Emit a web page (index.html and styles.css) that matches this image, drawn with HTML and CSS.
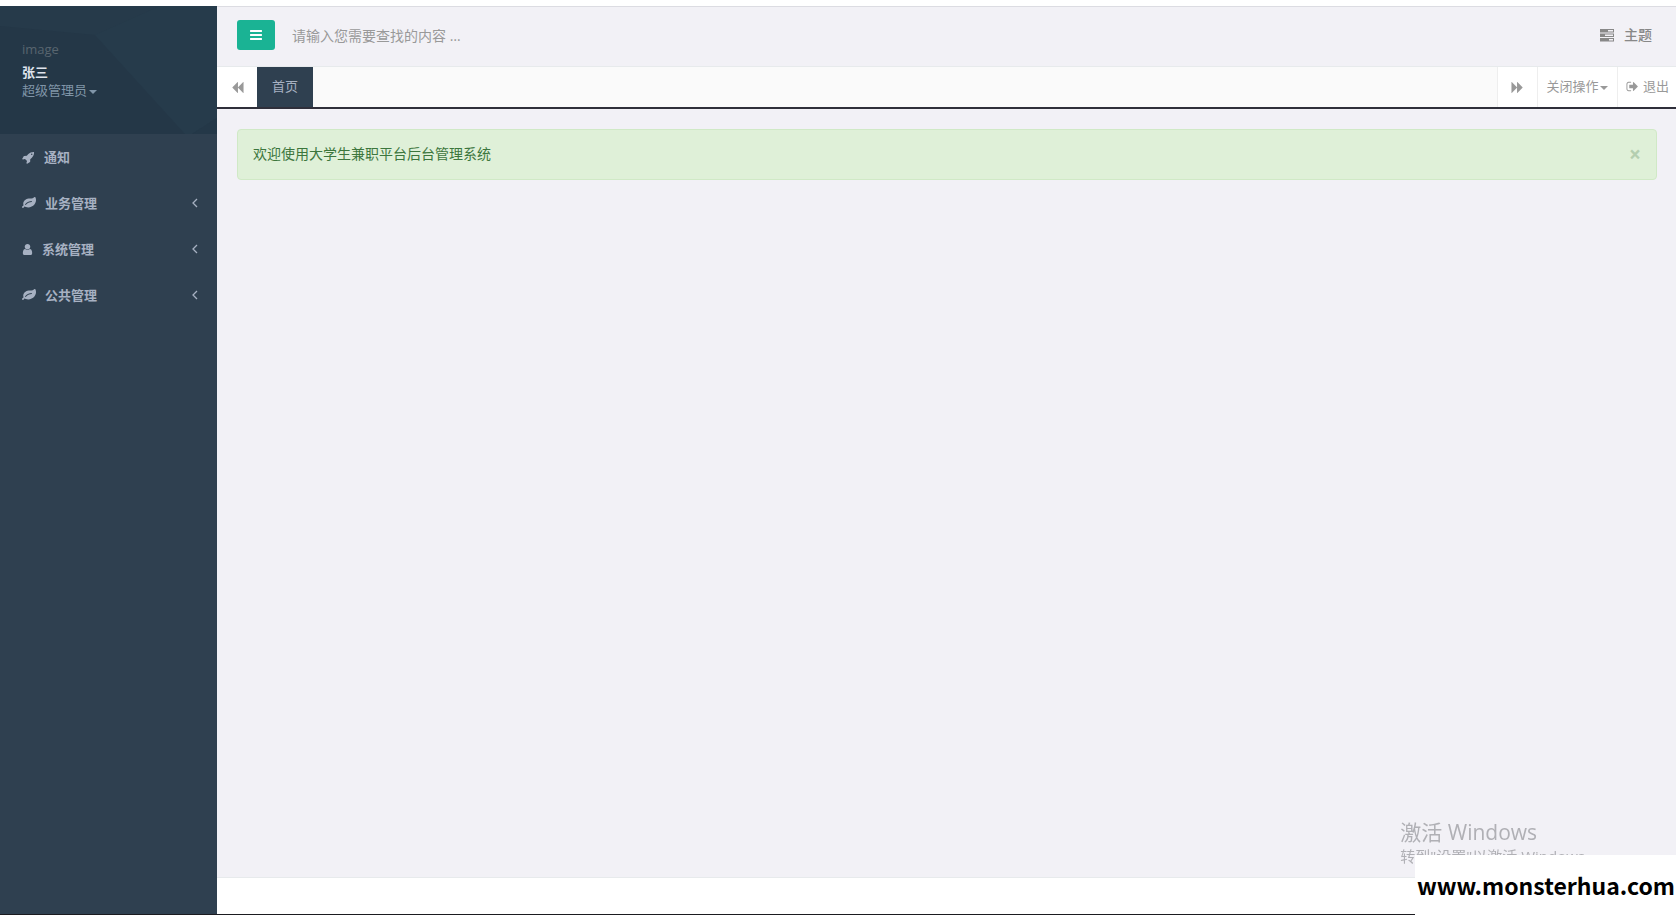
FILE: index.html
```
<!DOCTYPE html>
<html lang="zh">
<head>
    <meta charset="UTF-8">
    <meta name="viewport" content="width=device-width, initial-scale=1.0">
    <title>大学生兼职平台后台管理系统</title>
    <link rel="stylesheet" href="styles.css">
</head>
<body>
    <svg class="sprite" aria-hidden="true">
        <symbol id="icon-bars" viewBox="0 0 1792 1792"><path d="M1664 1344v128q0 26-19 45t-45 19h-1408q-26 0-45-19t-19-45v-128q0-26 19-45t45-19h1408q26 0 45 19t19 45zm0-512v128q0 26-19 45t-45 19h-1408q-26 0-45-19t-19-45v-128q0-26 19-45t45-19h1408q26 0 45 19t19 45zm0-512v128q0 26-19 45t-45 19h-1408q-26 0-45-19t-19-45v-128q0-26 19-45t45-19h1408q26 0 45 19t19 45z"/></symbol>
        <symbol id="icon-backward" viewBox="0 0 1792 1792"><path d="M1683 141q19-19 32-13t13 32v1472q0 26-13 32t-32-13l-710-710q-9-9-13-19v710q0 26-13 32t-32-13l-710-710q-19-19-19-45t19-45l710-710q19-19 32-13t13 32v710q4-10 13-19z"/></symbol>
        <symbol id="icon-forward" viewBox="0 0 1792 1792"><path transform="matrix(-1 0 0 1 1792 0)" d="M1683 141q19-19 32-13t13 32v1472q0 26-13 32t-32-13l-710-710q-9-9-13-19v710q0 26-13 32t-32-13l-710-710q-19-19-19-45t19-45l710-710q19-19 32-13t13 32v710q4-10 13-19z"/></symbol>
        <symbol id="icon-rocket" viewBox="0 0 1792 1792"><path d="M1440 448q0-40-28-68t-68-28-68 28-28 68 28 68 68 28 68-28 28-68zm224-288q0 249-75.5 430.5t-253.5 360.5q-81 80-195 176l-20 379q-2 16-16 26l-384 224q-7 4-16 4-12 0-23-9l-64-64q-13-14-8-32l85-276-281-281-276 85q-3 1-9 1-14 0-23-9l-64-64q-17-19-5-39l224-384q10-14 26-16l379-20q96-114 176-195 188-187 358-258t431-71q14 0 24 9.500t10 22.500z"/></symbol>
        <symbol id="icon-leaf" viewBox="0 0 1792 1792"><path d="M1280 704q0-26-19-45t-45-19q-172 0-318 49.500t-259.500 134-235.500 219.500q-19 21-19 45 0 26 19 45t45 19q24 0 45-19 27-24 74-71t67-66q137-124 268.500-176t313.500-52q26 0 45-19t19-45zm512-198q0 95-20 193-46 224-184.500 383t-357.500 268q-214 108-438 108-148 0-286-47-15-5-88-42t-96-37q-16 0-39.500 32t-45 70-52.500 70-60 32q-43 0-63.500-17.500t-45.500-59.500q-2-4-6-11t-5.500-10-3-9.500-1.500-13.500q0-35 31-73.500t68-65.500 68-56 31-48q0-4-14-38t-16-44q-9-51-9-104 0-115 43.500-220t119-184.500 170.500-139 204-95.500q55-18 145-25.500t179.500-9 178.500-6 163.500-24 113.500-56.500l29.500-29.500 29.500-28 27-20 36.500-16 43.500-4.500q39 0 70.500 46t47.500 112 24 124 8 96z"/></symbol>
        <symbol id="icon-user" viewBox="256 0 1280 1792"><path d="M1536 1399q0 109-62.500 187t-150.500 78h-854q-88 0-150.500-78t-62.500-187q0-85 8.500-160.500t31.500-152 58.500-131 94-89 134.500-34.500q131 128 313 128t313-128q76 0 134.500 34.500t94 89 58.500 131 31.500 152 8.500 160.500zm-256-887q0 159-112.500 271.500t-271.500 112.500-271.500-112.500-112.500-271.500 112.500-271.500 271.500-112.500 271.500 112.500 112.500 271.500z"/></symbol>
        <symbol id="icon-tasks" viewBox="0 0 14 14"><path fill-rule="evenodd" d="M0 1h14v3.500H0zM8 2h5v1.500H8zM0 5.500h14V9H0zM5 6.500h8V8H5zM0 10h14v3.500H0zM9 11h4v1.500H9z"/></symbol>
        <symbol id="icon-sign-out" viewBox="0 0 1792 1792"><path d="M704 1440q0 4 1 20t.5 26.500-3 23.500-10 19.500-20.500 6.500h-320q-119 0-203.500-84.500t-84.500-203.500v-704q0-119 84.500-203.500t203.500-84.500h320q13 0 22.500 9.500t9.500 22.500q0 4 1 20t.5 26.500-3 23.500-10 19.500-20.500 6.500h-320q-66 0-113 47t-47 113v704q0 66 47 113t113 47h312l11.500 1 11.500 3 8 5.500 7 9 2 13.500zm928-544q0 26-19 45l-544 544q-19 19-45 19t-45-19-19-45v-288h-448q-26 0-45-19t-19-45v-384q0-26 19-45t45-19h448v-288q0-26 19-45t45-19 45 19l544 544q19 19 19 45z"/></symbol>
        <symbol id="icon-angle-left" viewBox="0 0 6 10"><path d="M5 1 1 5l4 4" fill="none" stroke="currentColor" stroke-width="1.300"/></symbol>
    </svg>

    <div class="wrapper">
        <nav class="sidebar">
            <div class="nav-header">
                <svg class="nav-pattern" viewBox="0 0 217 128" preserveAspectRatio="none" aria-hidden="true">
                    <path fill="#263a4a" d="M0 0h217v128H0z"/>
                    <path fill="#243747" d="M0 20 95 29l90 99H0z"/>
                    <path fill="#263b4b" d="M95 29 160 0h57v112l-25 16h-7z"/>
                    <path fill="#243848" d="m217 112-25 16h25z"/>
                </svg>
                <div class="profile">
                    <span class="avatar-alt">image</span>
                    <button type="button" class="profile-toggle">
                        <strong>张三</strong>
                        <span class="role">超级管理员<b class="caret"></b></span>
                    </button>
                </div>
            </div>
            <ul class="side-menu">
                <li><a href="#"><svg class="icon"><use href="#icon-rocket"/></svg><span>通知</span></a></li>
                <li><a href="#"><svg class="icon icon-wide"><use href="#icon-leaf"/></svg><span>业务管理</span><svg class="arrow"><use href="#icon-angle-left"/></svg></a></li>
                <li><a href="#"><svg class="icon icon-narrow"><use href="#icon-user"/></svg><span>系统管理</span><svg class="arrow"><use href="#icon-angle-left"/></svg></a></li>
                <li><a href="#"><svg class="icon icon-wide"><use href="#icon-leaf"/></svg><span>公共管理</span><svg class="arrow"><use href="#icon-angle-left"/></svg></a></li>
            </ul>
        </nav>

        <div class="page">
            <header class="topbar">
                <button type="button" class="btn-minimalize" aria-label="收起菜单"><svg class="icon icon-wide"><use href="#icon-bars"/></svg></button>
                <input type="text" class="search" placeholder="请输入您需要查找的内容 …" aria-label="搜索">
                <a href="#" class="theme"><svg class="icon icon-wide"><use href="#icon-tasks"/></svg>主题</a>
            </header>

            <div class="tabs">
                <button type="button" class="tab-roll" aria-label="向左"><svg class="icon"><use href="#icon-backward"/></svg></button>
                <div class="tab-list">
                    <a href="#" class="tab active">首页</a>
                </div>
                <button type="button" class="tab-roll right" aria-label="向右"><svg class="icon"><use href="#icon-forward"/></svg></button>
                <button type="button" class="tab-close">关闭操作<b class="caret"></b></button>
                <a href="#" class="tab-exit"><svg class="icon"><use href="#icon-sign-out"/></svg>退出</a>
            </div>

            <main class="content">
                <div class="alert">
                    <span>欢迎使用大学生兼职平台后台管理系统</span>
                    <button type="button" class="close" aria-label="关闭">×</button>
                </div>
            </main>

            <footer class="footer"></footer>
        </div>
    </div>

    <div class="activate">
        <p class="activate-title">激活 Windows</p>
        <p class="activate-text">转到"设置"以激活 Windows。</p>
    </div>
    <div class="site-mark">www.monsterhua.com</div>
</body>
</html>
```

FILE: styles.css
```
* {
    box-sizing: border-box;
}
body {
    margin: 0;
    font-family: "Open Sans", "Noto Sans CJK SC", sans-serif;
    font-size: 13px;
    line-height: 18px;
    color: #676a6c;
    background-color: #fff;
}
a {
    color: inherit;
    text-decoration: none;
}
button {
    padding: 0;
    border: none;
    background: none;
    font: inherit;
    color: inherit;
    cursor: pointer;
}
.sprite {
    display: none;
}
.icon {
    flex: none;
    width: 13px;
    height: 13px;
    fill: currentColor;
}
.icon-wide {
    width: 14px;
    height: 14px;
}
.icon-narrow {
    width: 11px;
}
.caret {
    display: inline-block;
    margin-left: 2px;
    vertical-align: middle;
    border-top: 4px solid;
    border-left: 4px solid transparent;
    border-right: 4px solid transparent;
}
.wrapper {
    display: flex;
    min-height: 100vh;
    padding-top: 6px;
    border-bottom: 1px solid #1b1b20;
}

/* 左侧导航 */
.sidebar {
    flex: none;
    width: 217px;
    background-color: #2f4050;
    color: #a7b1c2;
}
.nav-header {
    display: grid;
    height: 128px;
}
.nav-pattern,
.profile {
    grid-area: 1 / 1;
    width: 100%;
    height: 128px;
}
.profile {
    z-index: 1;
    padding: 34px 22px;
}
.avatar-alt {
    display: block;
    margin-bottom: 5px;
    color: #58656f;
}
.profile-toggle {
    display: flex;
    flex-direction: column;
    align-items: flex-start;
}
.profile-toggle strong {
    color: #dfe4ed;
}
.role {
    color: #8095a8;
}
.side-menu {
    margin: 0;
    padding: 0;
    list-style: none;
}
.side-menu a {
    display: flex;
    align-items: center;
    gap: 9px;
    padding: 14px 19px 14px 22px;
    font-weight: 600;
}
.arrow {
    width: 6px;
    height: 10px;
    margin-left: auto;
}

/* 右侧 */
.page {
    flex: 1;
    display: flex;
    flex-direction: column;
    min-width: 0;
    background-color: #f2f1f6;
}
.topbar {
    display: flex;
    align-items: center;
    height: 61px;
    padding: 0 24px 3px 20px;
    border-top: 1px solid #dcdce2;
    border-bottom: 1px solid #e7eaec;
    font-size: 14px;
}
.btn-minimalize {
    display: flex;
    align-items: center;
    justify-content: center;
    width: 38px;
    height: 30px;
    border-radius: 3px;
    background-color: #1ab394;
    color: #fff;
}
.search {
    flex: 1;
    min-width: 0;
    height: 30px;
    padding: 0 17px;
    border: none;
    outline: none;
    background: none;
    font: inherit;
    color: #676a6c;
}
.search::placeholder {
    color: #999;
    opacity: 1;
}
.theme {
    display: flex;
    align-items: center;
    gap: 10px;
    font-weight: 500;
    color: #888;
}
.tabs {
    display: flex;
    height: 42px;
    border-bottom: 2px solid #2f2f3a;
    background-color: #fafafa;
    color: #999;
}
.tab-roll {
    display: flex;
    align-items: center;
    justify-content: center;
    width: 40px;
    background-color: #fff;
}
.right,
.tab-close,
.tab-exit {
    border-left: 1px solid #eee;
    background-color: #fff;
}
.tab-list {
    flex: 1;
    display: flex;
}
.tab {
    display: flex;
    align-items: center;
    padding: 0 15px;
}
.tab.active {
    background-color: #2f4050;
    color: #a7b1c2;
}
.tab-close {
    width: 80px;
}
.tab-exit {
    display: flex;
    align-items: center;
    gap: 4px;
    padding: 0 7px 0 8px;
}
.tab,
.tab-close,
.tab-exit {
    padding-bottom: 2px;
}
.content {
    flex: 1;
    padding: 20px 19px 20px 20px;
}
.alert {
    display: flex;
    align-items: center;
    justify-content: space-between;
    padding: 14px 15px 15px;
    border: 1px solid #d0e9c6;
    border-radius: 4px;
    background-color: #dff0d8;
    color: #3c763d;
    font-size: 14px;
    line-height: 20px;
}
.close {
    font-size: 21px;
    font-weight: 700;
    line-height: 20px;
    color: #b4ceb0;
}
.footer {
    height: 37px;
    border-top: 1px solid #e7eaec;
    background-color: #fff;
}

/* 右下角浮层 */
.activate {
    position: fixed;
    right: 76px;
    bottom: 48px;
    color: #b0b0b5;
    white-space: nowrap;
}
.activate p {
    margin: 0;
}
.activate-title {
    font-size: 21px;
    line-height: 26px;
}
.activate-text {
    font-size: 15px;
    line-height: 22px;
}
.site-mark {
    position: fixed;
    right: 0;
    bottom: 0;
    padding: 12px 1px 12px 2px;
    background-color: #fff;
    color: #000;
    font-family: "Noto Sans CJK SC", sans-serif;
    font-size: 23px;
    font-weight: 700;
    line-height: 36px;
}
```
